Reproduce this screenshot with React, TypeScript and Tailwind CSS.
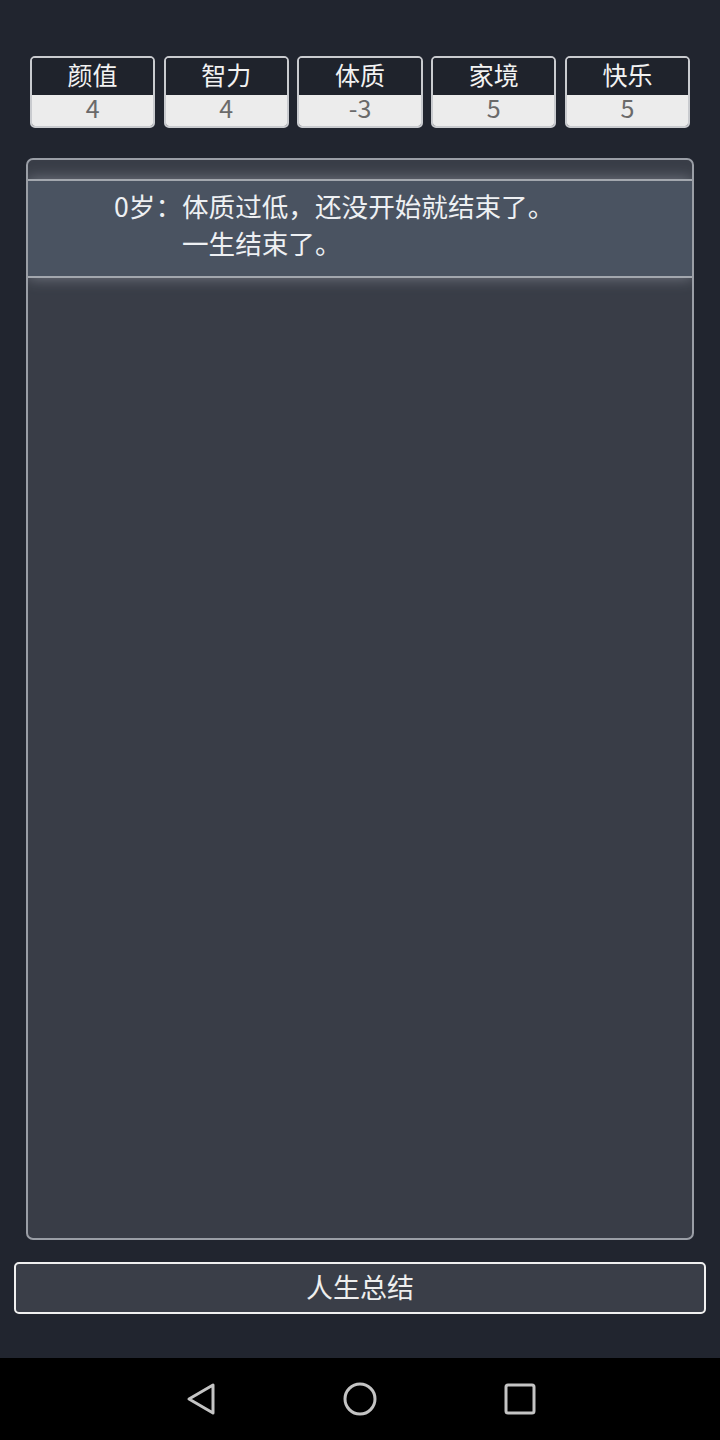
const STATS = [
  { label: "颜值", value: "4" },
  { label: "智力", value: "4" },
  { label: "体质", value: "-3" },
  { label: "家境", value: "5" },
  { label: "快乐", value: "5" },
]

const FONT = { fontFamily: '"Noto Sans CJK SC", "Noto Sans", sans-serif' }

function StatBox({ label, value }: { label: string; value: string }) {
  return (
    <div className="flex flex-col h-[72px] rounded-[5px] border-2 border-[#c9cbcf] overflow-hidden">
      <div className="h-[38px] bg-[#1f232c] flex items-center justify-center pb-[4px] text-[25px] leading-none text-[#f2f2f2]">
        {label}
      </div>
      <div className="flex-1 bg-[#ececec] flex items-center justify-center pb-[6px] text-[25px] leading-none text-[#6a6a6a]">
        {value}
      </div>
    </div>
  )
}

export default function App() {
  return (
    <div className="w-[720px] h-[1440px] flex flex-col bg-[#21252f]" style={FONT}>
      <div className="flex-1 flex flex-col pt-[56px] pb-[44px]">
        <div className="grid grid-cols-5 gap-[8.5px] px-[30px]">
          {STATS.map(s => (
            <StatBox key={s.label} label={s.label} value={s.value} />
          ))}
        </div>

        <div className="mt-[30px] mx-[26px] h-[1082px] rounded-[7px] border-2 border-[#9a9ea6] bg-[#393d47] pt-[19px] overflow-hidden">
          <div className="flex bg-[#4a5361] border-y-2 border-[#a3a7ae] pt-[6px] pb-[15px] shadow-[0_0_14px_rgba(210,215,225,0.4)] text-[26.6px] leading-[37px] text-[#eef0f3]">
            <div className="w-[154px] shrink-0 text-right">0岁：</div>
            <div className="flex-1">
              <div>体质过低，还没开始就结束了。</div>
              <div>一生结束了。</div>
            </div>
          </div>
        </div>

        <div className="mt-[22px] mx-[14px] h-[52px] rounded-[5px] border-2 border-[#f0f0f0] bg-[#3a3e48] flex items-center justify-center pb-[1px] text-[27px] text-[#eeeeee]">
          人生总结
        </div>
      </div>

      <div className="h-[82px] bg-black flex items-center justify-center gap-[112px]">
        <svg width="48" height="48" viewBox="0 0 48 48" fill="none">
          <path d="M37 10 L37 38 L13 24 Z" stroke="#c4c4c4" strokeWidth="3" strokeLinejoin="round" />
        </svg>
        <svg width="48" height="48" viewBox="0 0 48 48" fill="none">
          <circle cx="24" cy="24" r="15" stroke="#c4c4c4" strokeWidth="3" />
        </svg>
        <svg width="48" height="48" viewBox="0 0 48 48" fill="none">
          <rect x="10" y="10" width="28" height="28" rx="2" stroke="#c4c4c4" strokeWidth="3" />
        </svg>
      </div>
    </div>
  )
}
